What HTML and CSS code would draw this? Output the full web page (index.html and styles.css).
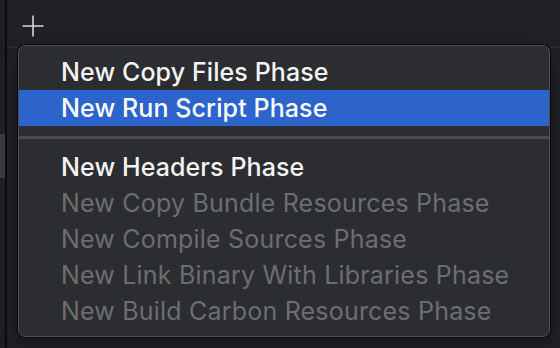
FILE: index.html
```html
<!DOCTYPE html>
<html lang="en">
<head>
    <meta charset="UTF-8">
    <title>Build Phases</title>
    <link rel="stylesheet" href="styles.css">
</head>
<body>
    <div class="window">
        <div class="sidebar">
            <div class="sidebar-sel"></div>
        </div>
        <div class="divider"></div>
        <div class="main">
            <div class="toolbar">
                <svg class="add-icon" width="22" height="22" viewBox="0 0 22 22">
                    <path d="M11 0.5V21.5M0.5 11H21.5" stroke="#d6d6d7" stroke-width="1.6" fill="none"/>
                </svg>
            </div>
            <div class="rule rule-top"></div>
            <div class="menu">
                <div class="item">New Copy Files Phase</div>
                <div class="item selected">New Run Script Phase</div>
                <div class="separator"></div>
                <div class="item">New Headers Phase</div>
                <div class="item disabled">New Copy Bundle Resources Phase</div>
                <div class="item disabled">New Compile Sources Phase</div>
                <div class="item disabled">New Link Binary With Libraries Phase</div>
                <div class="item disabled">New Build Carbon Resources Phase</div>
            </div>
        </div>
    </div>
</body>
</html>
```

FILE: styles.css
```css
body {
    margin: 0;
    background: #1f2125;
    font-family: 'Inter', 'Noto Sans', sans-serif;
    overflow: hidden;
}
.window {
    display: flex;
    height: 348px;
}
.sidebar {
    width: 5px;
    background: #1d1f22;
    padding-top: 134px;
}
.sidebar-sel {
    height: 44px;
    background: #3b3b3d;
}
.divider {
    width: 2px;
    background: #0c0d0f;
}
.main {
    flex: 1;
    position: relative;
}
.toolbar {
    height: 46px;
    padding-left: 15px;
    padding-top: 15px;
    box-sizing: border-box;
}
.add-icon {
    display: block;
}
.rule {
    height: 2px;
    background: #2a2c30;
}
.menu {
    position: absolute;
    left: 11px;
    top: 45px;
    width: 530px;
    padding: 8px 0 7px;
    background: #2c2d30;
    border: 1px solid #515255;
    border-radius: 7px;
    box-shadow: 0 0 0 1px #08090a, 0 6px 16px rgba(0, 0, 0, 0.4);
}
.item {
    height: 36px;
    line-height: 36px;
    padding-left: 42px;
    font-size: 25px;
    color: #f4f4f5;
    font-weight: 500;
    letter-spacing: 0.1px;
}
.item.selected {
    background: #2c64cc;
    color: #ffffff;
}
.item.disabled {
    color: #6c6d70;
    font-weight: 400;
    letter-spacing: 0.2px;
}
.separator {
    height: 3px;
    margin: 10px 0;
    background: #4a4b4e;
}
```
